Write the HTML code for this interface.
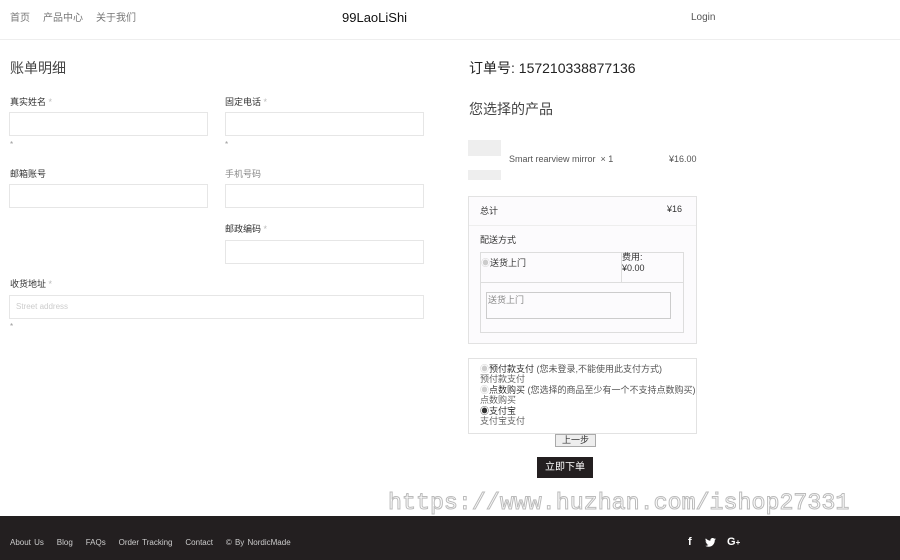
<!DOCTYPE html>
<html><head><meta charset="utf-8"><style>
*{margin:0;padding:0;box-sizing:border-box}
body{width:900px;height:560px;position:relative;background:#fff;font-family:"Liberation Sans","Noto Sans CJK SC",sans-serif;color:#333;overflow:hidden}
.a{position:absolute;white-space:nowrap}
.nav{font-size:10px;color:#777;top:9px}
.lbl{font-size:9px;color:#333}
.lbl span{color:#bbb}
.inp{position:absolute;border:1px solid #e6e6e6;height:24px;background:#fff}
.star{font-size:8px;color:#999}
.bx{position:absolute;border:1px solid #e2e2e2}
.pay div{height:10.4px;line-height:10.4px}
</style></head><body>
<div class="a nav" style="left:10px">首页</div>
<div class="a nav" style="left:43px">产品中心</div>
<div class="a nav" style="left:96px">关于我们</div>
<div class="a" style="left:342px;top:10px;font-size:13px;color:#111">99LaoLiShi</div>
<div class="a" style="left:691px;top:12px;font-size:10px;color:#555">Login</div>
<div style="position:absolute;left:0;top:39px;width:900px;height:1px;background:#eee"></div>

<div class="a" style="left:10px;top:58px;font-size:14px;color:#444">账单明细</div>
<div class="a lbl" style="left:10px;top:95px">真实姓名 <span>*</span></div>
<div class="inp" style="left:9px;top:112px;width:199px"></div>
<div class="a star" style="left:10px;top:140px">*</div>
<div class="a lbl" style="left:225px;top:95px">固定电话 <span>*</span></div>
<div class="inp" style="left:225px;top:112px;width:199px"></div>
<div class="a star" style="left:225px;top:140px">*</div>
<div class="a lbl" style="left:10px;top:167px">邮箱账号</div>
<div class="inp" style="left:9px;top:184px;width:199px"></div>
<div class="a lbl" style="left:225px;top:167px;color:#888">手机号码</div>
<div class="inp" style="left:225px;top:184px;width:199px"></div>
<div class="a lbl" style="left:225px;top:222px">邮政编码 <span>*</span></div>
<div class="inp" style="left:225px;top:240px;width:199px"></div>
<div class="a lbl" style="left:10px;top:277px">收货地址 <span>*</span></div>
<div class="inp" style="left:9px;top:295px;width:415px;font-size:8px;color:#ccc;padding:6px 6px">Street address</div>
<div class="a star" style="left:10px;top:322px">*</div>

<div class="a" style="left:469px;top:58px;font-size:14px;color:#222">订单号: 157210338877136</div>
<div class="a" style="left:469px;top:99px;font-size:14px;color:#444">您选择的产品</div>
<div style="position:absolute;left:468px;top:140px;width:33px;height:16px;background:#eee"></div>
<div style="position:absolute;left:468px;top:170px;width:33px;height:10px;background:#eee"></div>
<div class="a" style="left:509px;top:154px;font-size:9px;color:#555">Smart rearview mirror &nbsp;× 1</div>
<div class="a" style="left:669px;top:154px;font-size:9px;color:#555">¥16.00</div>

<div class="bx" style="left:468px;top:196px;width:229px;height:148px;background:#fcfbfd"></div>
<div style="position:absolute;left:469px;top:225px;width:227px;height:1px;background:#eee"></div>
<div class="a" style="left:480px;top:204px;font-size:9px">总计</div>
<div class="a" style="left:667px;top:204px;font-size:9px">¥16</div>
<div class="a" style="left:480px;top:233px;font-size:9px">配送方式</div>
<div class="bx" style="left:480px;top:252px;width:204px;height:81px;border-color:#ddd"></div>
<div style="position:absolute;left:480px;top:282px;width:204px;height:1px;background:#ddd"></div>
<div style="position:absolute;left:621px;top:252px;width:1px;height:30px;background:#ddd"></div>
<div class="a" style="left:481px;top:256px;font-size:9px"><span style="color:#ccc">◉</span>送货上门</div>
<div class="a" style="left:622px;top:252px;font-size:9px;line-height:11px">费用:<br>¥0.00</div>
<div class="bx" style="left:486px;top:292px;width:185px;height:27px;border-color:#ccc;font-size:9px;color:#888;padding:0 1px">送货上门</div>

<div class="bx" style="left:468px;top:358px;width:229px;height:76px"></div>
<div class="a pay" style="left:480px;top:364px;font-size:9px;color:#333">
<div><span style="color:#ccc">◉</span>预付款支付 <span style="color:#555">(您未登录,不能使用此支付方式)</span></div>
<div style="color:#666">预付款支付</div>
<div><span style="color:#ccc">◉</span>点数购买 <span style="color:#555">(您选择的商品至少有一个不支持点数购买)</span></div>
<div style="color:#666">点数购买</div>
<div>◉支付宝</div>
<div style="color:#666">支付宝支付</div></div>
<div class="a" style="left:555px;top:434px;width:41px;height:13px;border:1px solid #aaa;background:#eee;font-size:9px;text-align:center;line-height:11px">上一步</div>
<div class="a" style="left:537px;top:457px;width:56px;height:21px;background:#231f20;color:#fff;font-size:10px;text-align:center;line-height:21px">立即下单</div>

<div class="a" style="left:388px;top:490px;font-family:'Liberation Mono',monospace;font-size:23.3px;color:#fff;-webkit-text-stroke:1px #bbb">https://www.huzhan.com/ishop27331</div>

<div style="position:absolute;left:0;top:516px;width:900px;height:44px;background:#231f20"></div>
<div class="a" style="left:10px;top:538px;font-size:8px;color:#ccc;word-spacing:1px">About Us &nbsp;&nbsp; Blog &nbsp;&nbsp; FAQs &nbsp;&nbsp; Order Tracking &nbsp;&nbsp; Contact &nbsp;&nbsp; © By NordicMade</div>
<div class="a" style="left:688px;top:536px;font-size:11px;color:#fff;font-weight:bold">f</div>
<svg class="a" style="left:705px;top:538px" width="11" height="9" viewBox="0 0 24 20"><path fill="#fff" d="M24 2.4a10 10 0 0 1-2.8.8A5 5 0 0 0 23.3.4a10 10 0 0 1-3.1 1.2A4.9 4.9 0 0 0 11.8 6 14 14 0 0 1 1.7.9a4.9 4.9 0 0 0 1.5 6.6A4.9 4.9 0 0 1 1 6.9a4.9 4.9 0 0 0 3.9 4.8 5 5 0 0 1-2.2.1 4.9 4.9 0 0 0 4.6 3.4A9.9 9.9 0 0 1 0 17.3 14 14 0 0 0 7.5 19.5c9 0 14-7.5 14-14v-.6A10 10 0 0 0 24 2.4z"/></svg>
<div class="a" style="left:727px;top:536px;font-size:11px;color:#fff;font-weight:bold">G<span style="font-size:8px">+</span></div>
</body></html>
